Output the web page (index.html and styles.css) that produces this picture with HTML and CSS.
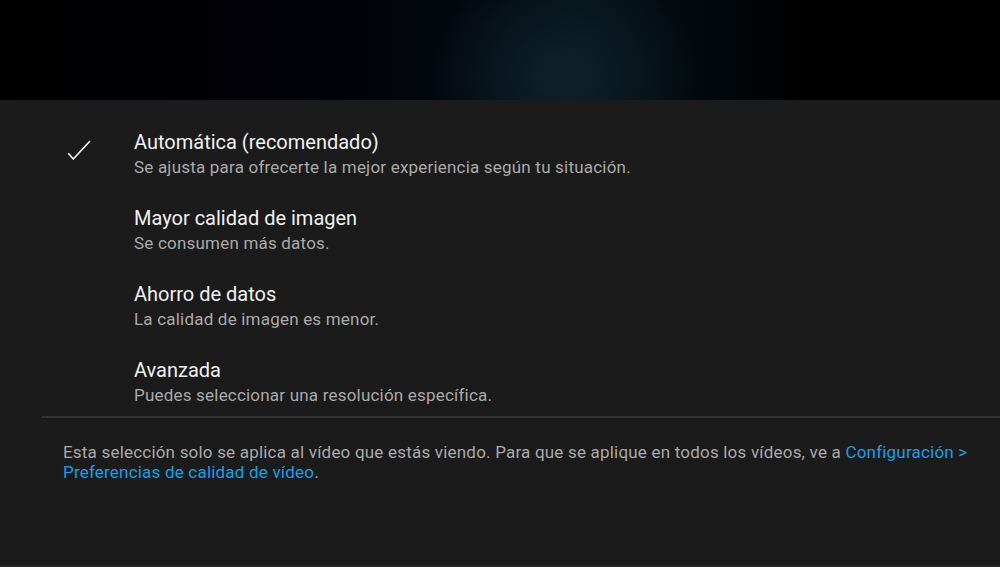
FILE: index.html
```html
<!DOCTYPE html>
<html lang="es">
<head>
<meta charset="utf-8">
<title>Calidad de vídeo</title>
<link rel="stylesheet" href="styles.css">
</head>
<body>
<div class="video"></div>
<div class="sheet">
  <ul class="options">
    <li class="option selected">
      <span class="check">
        <svg width="24" height="22" viewBox="0 0 24 22"><polyline points="1.3,14.3 6.3,20 23,2" fill="none" stroke="#f1f1f1" stroke-width="1.7"/></svg>
      </span>
      <div class="text">
        <div class="title">Automática (recomendado)</div>
        <div class="desc">Se ajusta para ofrecerte la mejor experiencia según tu situación.</div>
      </div>
    </li>
    <li class="option">
      <span class="check"></span>
      <div class="text">
        <div class="title">Mayor calidad de imagen</div>
        <div class="desc">Se consumen más datos.</div>
      </div>
    </li>
    <li class="option">
      <span class="check"></span>
      <div class="text">
        <div class="title">Ahorro de datos</div>
        <div class="desc">La calidad de imagen es menor.</div>
      </div>
    </li>
    <li class="option">
      <span class="check"></span>
      <div class="text">
        <div class="title">Avanzada</div>
        <div class="desc">Puedes seleccionar una resolución específica.</div>
      </div>
    </li>
  </ul>
  <div class="divider"></div>
  <p class="note">Esta selección solo se aplica al vídeo que estás viendo. Para que se aplique en todos los vídeos, ve a <a href="#">Configuración &gt; Preferencias de calidad de vídeo</a>.</p>
</div>
</body>
</html>
```

FILE: styles.css
```css
html, body {
  margin: 0;
  padding: 0;
  background: #000;
  font-family: Roboto, "Liberation Sans", sans-serif;
}

.video {
  height: 100px;
  background:
    radial-gradient(ellipse 140px 110px at 56% 75%, rgba(14, 34, 44, 0.9), rgba(8, 20, 28, 0) 100%),
    linear-gradient(90deg, #000 0%, #010108 30%, #02060d 45%, #061319 58%, #030a10 68%, #000 80%, #000 100%);
}

.sheet {
  background: #1b1b1b;
  height: 467px;
  padding-top: 30px;
  box-sizing: border-box;
  border-bottom: 2px solid #262626;
}

.options {
  list-style: none;
  margin: 0;
  padding: 0;
  display: flex;
  flex-direction: column;
  gap: 29px;
}

.option {
  display: flex;
  align-items: flex-start;
}

.check {
  width: 67px;
  margin-left: 67px;
  flex: none;
  padding-top: 9px;
  height: 22px;
}

.check svg {
  display: block;
}

.title {
  color: #f1f1f1;
  font-size: 20px;
  line-height: 24px;
}

.desc {
  color: #aaaaaa;
  font-size: 17px;
  letter-spacing: 0.2px;
  line-height: 20px;
  margin-top: 3px;
}

.divider {
  margin: 11px 0 0 42px;
  height: 2px;
  background: #333333;
}

.note {
  margin: 24px 20px 0 63px;
  max-width: 920px;
  color: #aaaaaa;
  font-size: 17px;
  letter-spacing: 0.2px;
  line-height: 20px;
}

.note a {
  color: #1f9de2;
  text-decoration: none;
}
```
